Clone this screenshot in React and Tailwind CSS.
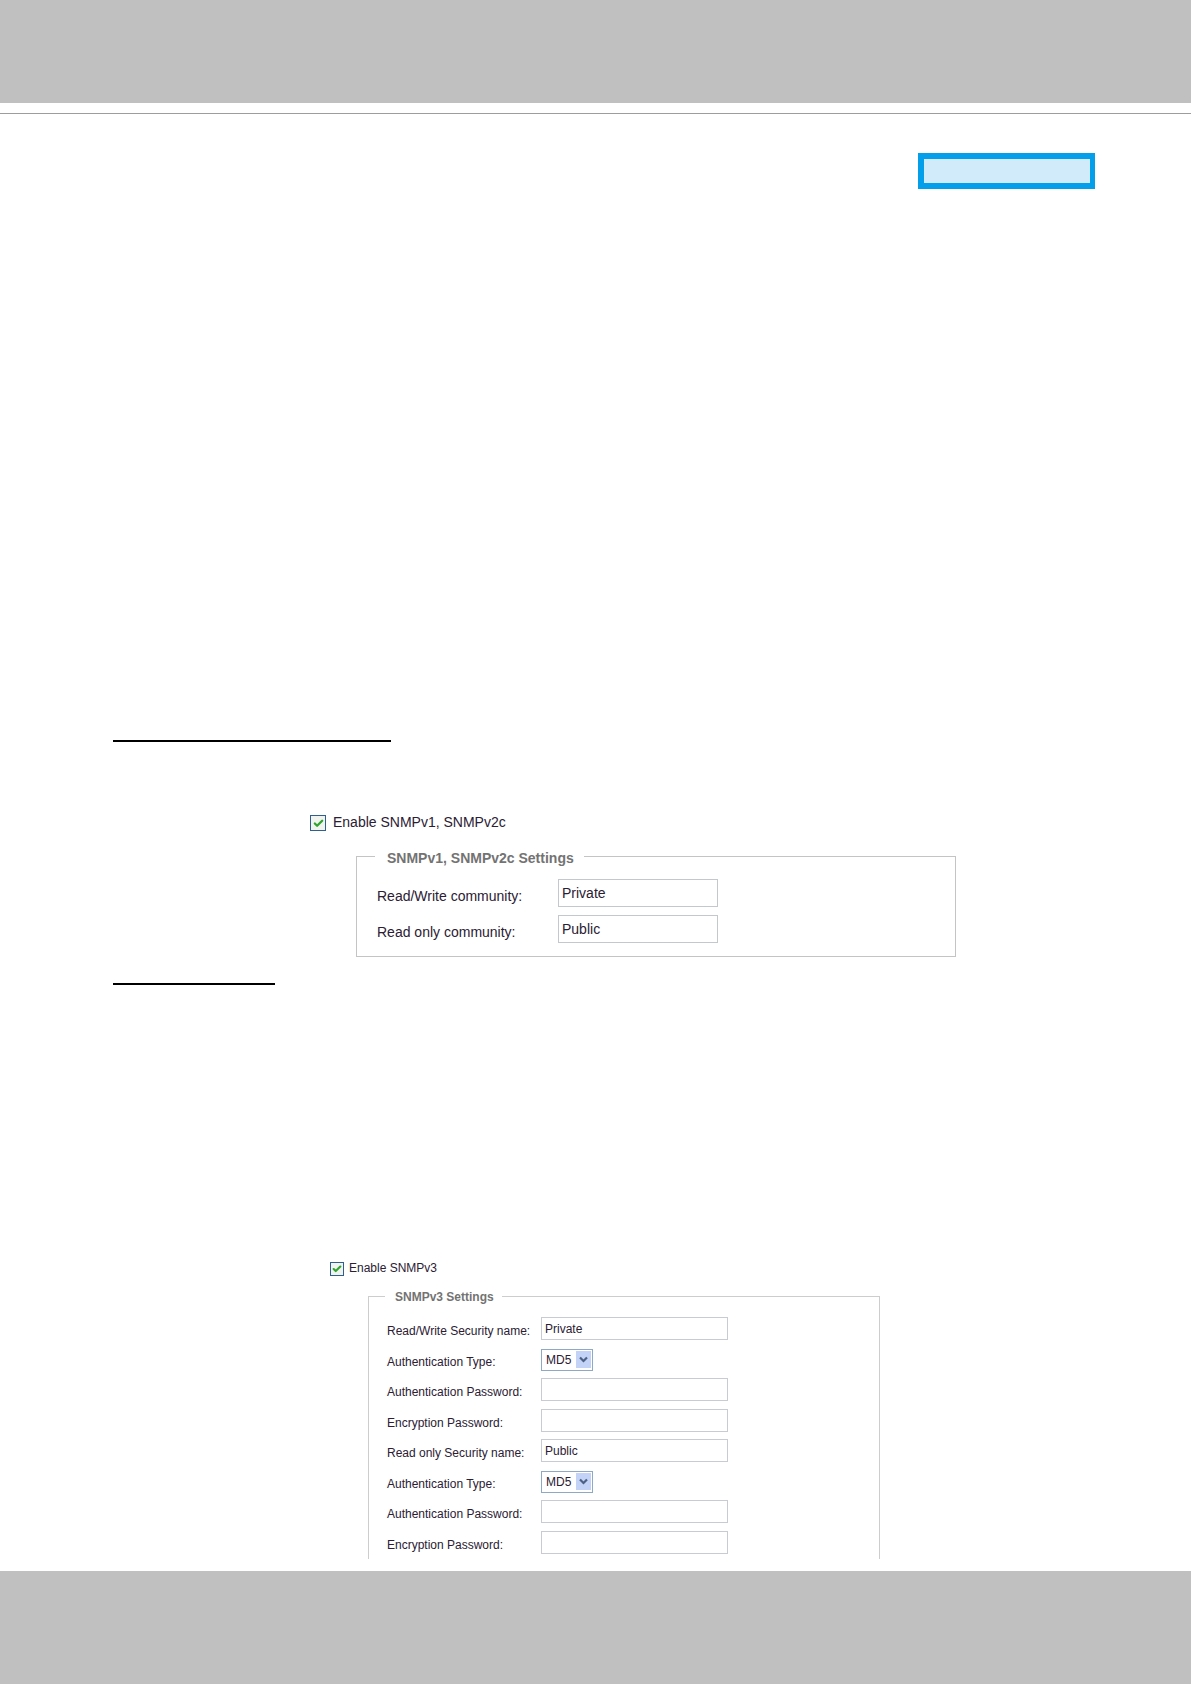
import { Check } from "lucide-react";

function Tick({ id, label, large }) {
  return (
    <div className={large ? "flex items-center gap-[7px] text-sm" : "flex items-center gap-[5px] text-xs"}>
      <span className="grid place-items-center">
        <input
          id={id}
          type="checkbox"
          defaultChecked
          className={
            large
              ? "peer col-start-1 row-start-1 size-4 appearance-none border border-[#2f5f8f] bg-[#f1f4ee]"
              : "peer col-start-1 row-start-1 size-[14px] appearance-none border border-[#2f5f8f] bg-[#f1f4ee]"
          }
        />
        <Check
          size={large ? 11 : 10}
          strokeWidth={5}
          className="pointer-events-none invisible col-start-1 row-start-1 text-[#2fa52f] peer-checked:visible"
        />
      </span>
      <label htmlFor={id} className={large ? "pb-[2px] leading-[14px]" : "pb-[2px] leading-[14px]"}>{label}</label>
    </div>
  );
}

function TextRow({ id, label, value = "", type = "text", large }) {
  return (
    <div className="flex">
      <label
        htmlFor={id}
        className={large ? "w-[181px] pt-[7px] text-sm leading-5" : "w-[154px] pt-[5px] text-xs leading-[18px]"}
      >
        {label}
      </label>
      <input
        id={id}
        type={type}
        defaultValue={value}
        className={
          large
            ? "h-7 w-40 border border-[#c3c8cd] bg-white px-[3px] text-sm"
            : "h-[23px] w-[187px] border border-[#c8cbd1] bg-white px-[3px] text-xs"
        }
      />
    </div>
  );
}

function SelectRow({ id, label }) {
  return (
    <div className="flex h-[23px]">
      <label htmlFor={id} className="w-[154px] pt-[5px] text-xs leading-[18px]">{label}</label>
      <span className="grid items-center justify-items-end">
        <select
          id={id}
          defaultValue="MD5"
          className="col-start-1 row-start-1 h-[22px] w-[52px] appearance-none border border-[#8fa9c4] bg-white pl-1 text-xs"
        >
          <option>MD5</option>
          <option>SHA</option>
        </select>
        <span className="pointer-events-none col-start-1 row-start-1 mr-[2px] grid h-[17px] w-[15px] place-items-center bg-[#c2d3f7]">
          <svg width="9" height="7" viewBox="0 0 9 7" fill="none" stroke="#4d6185" strokeWidth="2.2" aria-hidden="true">
            <path d="M1 1.5 4.5 5 8 1.5" />
          </svg>
        </span>
      </span>
    </div>
  );
}

function Credentials({ prefix, nameLabel, name }) {
  return (
    <div className="space-y-[7px]">
      <div className="space-y-2">
        <TextRow id={prefix + "-name"} label={nameLabel} value={name} />
        <SelectRow id={prefix + "-auth"} label="Authentication Type:" />
      </div>
      <div className="space-y-2">
        <TextRow id={prefix + "-authpw"} label="Authentication Password:" type="password" />
        <TextRow id={prefix + "-encpw"} label="Encryption Password:" type="password" />
      </div>
    </div>
  );
}

export default function App() {
  return (
    <div className="flex min-h-screen flex-col bg-white font-['Liberation_Sans',Arial,sans-serif] text-[#2b2033]">
      <header className="mb-[10px] h-[103px] bg-[#c0c0c0]" />
      <hr className="border-t border-[#9d9d9d]" />
      <main className="grow">
        <div className="mt-[39px] mr-24 ml-auto h-9 w-[177px] border-6 border-r-5 border-[#049fea] bg-[#d2ebfb]" />

        <hr className="mt-[551px] ml-[113px] w-[278px] border-t-2 border-black" />
        <section className="mt-[73px] mr-[235px] ml-[310px]">
          <Tick id="v1" label="Enable SNMPv1, SNMPv2c" large />
          <fieldset className="mt-[13px] ml-[46px] border border-[#c4c4c4] px-5 pb-[13px]">
            <legend className="-ml-[2px] pt-1 pr-[10px] pl-3 text-sm leading-5 font-bold text-[#737373]">
              SNMPv1, SNMPv2c Settings
            </legend>
            <div className="space-y-2 pt-[11px]">
              <TextRow id="rw" label="Read/Write community:" value="Private" large />
              <TextRow id="ro" label="Read only community:" value="Public" large />
            </div>
          </fieldset>
        </section>

        <hr className="mt-[26px] ml-[113px] w-[162px] border-t-2 border-black" />
        <section className="mt-[276px] mr-[311px] ml-[330px]">
          <Tick id="v3" label="Enable SNMPv3" />
          <fieldset className="mt-[9px] ml-[38px] border border-b-0 border-[#cdcdcd] px-[18px] pb-[5px]">
            <legend className="-ml-[2px] pt-[2px] pr-2 pl-[10px] text-xs leading-[18px] font-bold text-[#737373]">
              SNMPv3 Settings
            </legend>
            <div className="space-y-[7px] pt-[11px]">
              <Credentials prefix="rw3" nameLabel="Read/Write Security name:" name="Private" />
              <Credentials prefix="ro3" nameLabel="Read only Security name:" name="Public" />
            </div>
          </fieldset>
        </section>
      </main>
      <footer className="mt-3 h-[113px] bg-[#c0c0c0]" />
    </div>
  );
}
